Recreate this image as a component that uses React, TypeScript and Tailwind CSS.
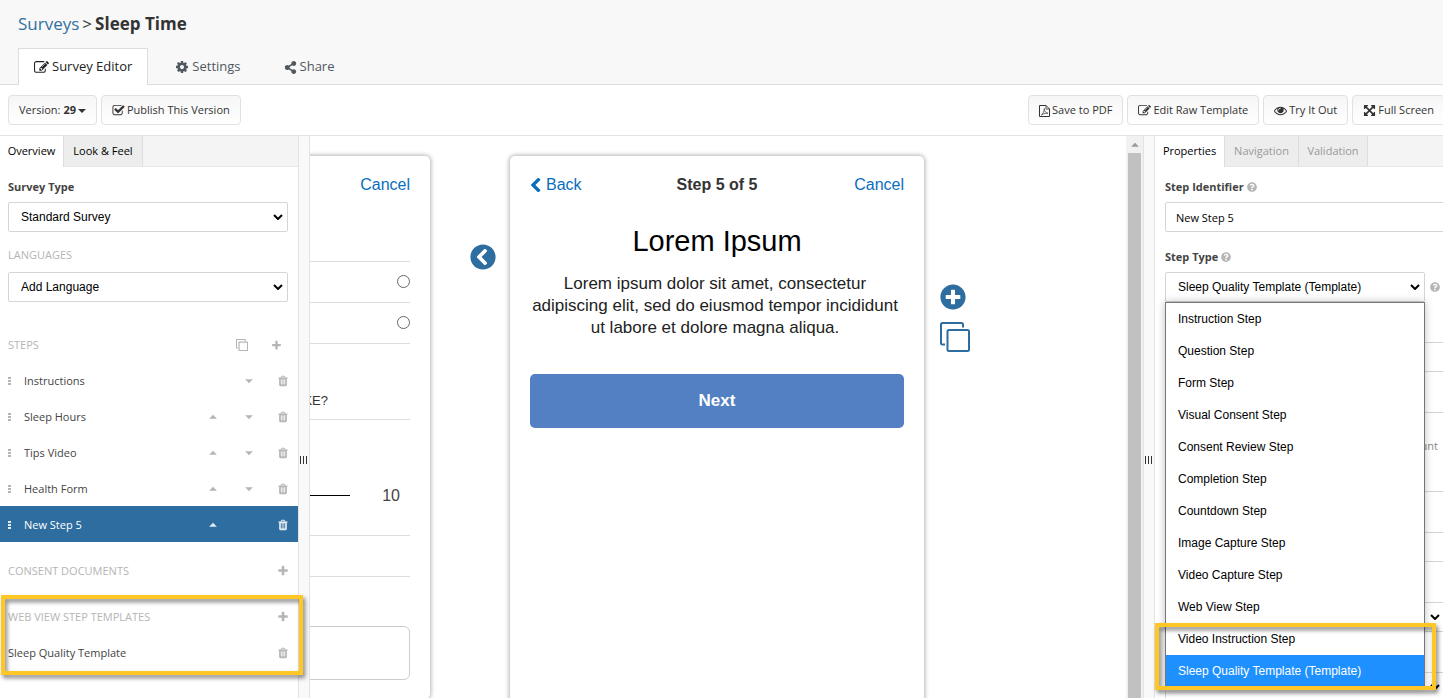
import React from 'react';
import clsx from 'clsx';
import { FaChevronCircleLeft, FaPlusCircle, FaQuestionCircle, FaShareAlt } from 'react-icons/fa';

const ICONS = {
  edit: 'M888 1184l116-116-152-152-116 116v56h96v96h56zm440-720q-16-16-33 1l-350 350q-17 17-1 33t33-1l350-350q17-17 1-33zm80 594v190q0 119-84.5 203.5t-203.5 84.5h-832q-119 0-203.5-84.5t-84.5-203.5v-832q0-119 84.5-203.5t203.5-84.5h832q63 0 117 25 15 7 18 23 3 17-9 29l-49 49q-14 14-32 8-23-6-45-6h-832q-66 0-113 47t-47 113v832q0 66 47 113t113 47h832q66 0 113-47t47-113v-126q0-13 9-22l64-64q15-15 35-7t20 29zm-96-738l288 288-672 672h-288v-288zm444 132l-92 92-288-288 92-92q28-28 68-28t68 28l152 152q28 28 28 68t-28 68z',
  check: 'M1472 930v318q0 119-84.5 203.5t-203.5 84.5h-832q-119 0-203.5-84.5t-84.5-203.5v-832q0-119 84.5-203.5t203.5-84.5h832q63 0 117 25 15 7 18 23 3 17-9 29l-49 49q-10 10-23 10-3 0-9-2-23-6-45-6h-832q-66 0-113 47t-47 113v832q0 66 47 113t113 47h832q66 0 113-47t47-113v-254q0-13 9-22l64-64q10-10 23-10 6 0 12 3 20 8 20 29zm231-489l-814 814q-24 24-57 24t-57-24l-430-430q-24-24-24-57t24-57l110-110q24-24 57-24t57 24l263 263 647-647q24-24 57-24t57 24l110 110q24 24 24 57t-24 57z',
  cog: 'M1152 896q0-106-75-181t-181-75-181 75-75 181 75 181 181 75 181-75 75-181zm512-109v222q0 12-8 23t-20 13l-185 28q-19 54-39 91 35 50 107 138 10 12 10 25t-9 23q-27 37-99 108t-94 71q-12 0-26-9l-138-108q-44 23-91 38-16 136-29 186-7 28-36 28h-222q-14 0-24.5-8.5t-11.5-21.5l-28-184q-49-16-90-37l-141 107q-10 9-25 9-14 0-25-11-126-114-165-168-7-10-7-23 0-12 8-23 15-21 51-66.5t54-70.5q-27-50-41-99l-183-27q-13-2-21-12.5t-8-23.5v-222q0-12 8-23t19-13l186-28q14-46 39-92-40-57-107-138-10-12-10-24 0-10 9-23 26-36 98.5-107.5t94.5-71.5q13 0 26 10l138 107q44-23 91-38 16-136 29-186 7-28 36-28h222q14 0 24.5 8.5t11.5 21.5l28 184q49 16 90 37l142-107q9-9 24-9 13 0 25 10 129 119 165 170 7 8 7 22 0 12-8 23-15 21-51 66.5t-54 70.5q26 50 41 98l183 28q13 2 21 12.5t8 23.5z',
  trash: 'M704 1376v-704q0-14-9-23t-23-9h-64q-14 0-23 9t-9 23v704q0 14 9 23t23 9h64q14 0 23-9t9-23zm256 0v-704q0-14-9-23t-23-9h-64q-14 0-23 9t-9 23v704q0 14 9 23t23 9h64q14 0 23-9t9-23zm256 0v-704q0-14-9-23t-23-9h-64q-14 0-23 9t-9 23v704q0 14 9 23t23 9h64q14 0 23-9t9-23zm-544-992h448l-48-117q-7-9-17-11h-317q-10 2-17 11zm928 32v64q0 14-9 23t-23 9h-96v948q0 83-47 143.5t-113 60.5h-832q-66 0-113-58.5t-47-141.5v-952h-96q-14 0-23-9t-9-23v-64q0-14 9-23t23-9h309l70-167q15-37 54-63t79-26h320q40 0 79 26t54 63l70 167h309q14 0 23 9t9 23z',
  plus: 'M1600 736v192q0 40-28 68t-68 28h-416v416q0 40-28 68t-68 28h-192q-40 0-68-28t-28-68v-416h-416q-40 0-68-28t-28-68v-192q0-40 28-68t68-28h416v-416q0-40 28-68t68-28h192q40 0 68 28t28 68v416h416q40 0 68 28t28 68z',
  eye: 'M1664 960q-152-236-381-353 61 104 61 225 0 185-131.5 316.5t-316.5 131.5-316.5-131.5-131.5-316.5q0-121 61-225-229 117-381 353 133 205 333.5 326.5t434.5 121.5 434.5-121.5 333.5-326.5zm-720-384q0-20-14-34t-34-14q-125 0-214.5 89.5t-89.5 214.5q0 20 14 34t34 14 34-14 14-34q0-86 61-147t147-61q20 0 34-14t14-34zm848 384q0 34-20 69-140 230-376.5 368.5t-499.5 138.5-499.5-139-376.5-368q-20-35-20-69t20-69q140-229 376.5-368t499.5-139 499.5 139 376.5 368q20 35 20 69z',
  arrows: 'M1411 541l-355 355 355 355 144-144q29-31 70-14 39 17 39 59v448q0 26-19 45t-45 19h-448q-42 0-59-40-17-39 14-69l144-144-355-355-355 355 144 144q31 30 14 69-17 40-59 40h-448q-26 0-45-19t-19-45v-448q0-42 40-59 39-17 69 14l144 144 355-355-355-355-144 144q-19 19-45 19-12 0-24-5-40-17-40-59v-448q0-26 19-45t45-19h448q42 0 59 40 17 39-14 69l-144 144 355 355 355-355-144-144q-31-30-14-69 17-40 59-40h448q26 0 45 19t19 45v448q0 42-39 59-13 5-25 5-26 0-45-19z',
  caretDown: 'M320 640h1152l-576 576z',
  caretUp: 'M320 1152h1152l-576-576z',
};

const Icon: React.FC<{ name: keyof typeof ICONS; size?: number; className?: string }> = ({
  name,
  size = 13,
  className,
}) => (
  <svg
    viewBox="0 0 1792 1792"
    width={size}
    height={size}
    fill="currentColor"
    aria-hidden="true"
    className={clsx('shrink-0', className)}
  >
    <path d={ICONS[name]} />
  </svg>
);

const CloneIcon: React.FC<{ size: number; stroke: number }> = ({ size, stroke }) => (
  <svg viewBox="0 0 30 30" width={size} height={size} fill="none" stroke="currentColor" strokeWidth={stroke} aria-hidden="true">
    <rect x="7.5" y="8" width="21.5" height="21" rx="1.5" />
    <path d="M5 22.500H2.500A1.500 1.500 0 0 1 1 21V2.500A1.500 1.500 0 0 1 2.500 1H21.500A1.500 1.500 0 0 1 23 2.500V5.500" />
  </svg>
);

const PdfIcon: React.FC = () => (
  <svg viewBox="0 0 11 12" width="11" height="12" fill="none" stroke="currentColor" aria-hidden="true">
    <path d="M.5.5h6.500l3.500 3.500v7.500H.500z" />
    <path d="M7 .5v3.500h3.500" strokeWidth=".8" />
    <path d="M2.300 10c1.700-1 3-3.800 3-6.500 0 2.700 1.200 4.300 3.700 4.800-2-.3-4 .1-6.700 1.700z" strokeWidth=".7" />
  </svg>
);

const ToolbarButton: React.FC<{ children: React.ReactNode }> = ({ children }) => (
  <button
    type="button"
    className="flex h-[30px] shrink-0 items-center gap-[2px] whitespace-nowrap rounded border border-[#e1e1e1] bg-gradient-to-b from-[#f6f6f6] to-white px-[10px] pt-px text-[#333]"
  >
    {children}
  </button>
);

interface SelectBoxProps {
  id?: string;
  label?: string;
  options: string[];
  value?: string;
  className?: string;
}

const SelectBox: React.FC<SelectBoxProps> = ({ id, label, options, value, className }) => (
  <div className={clsx('relative', className)}>
    <select
      id={id}
      aria-label={label}
      defaultValue={value}
      className="block h-[30px] w-full appearance-none rounded-xs border border-[#d5d5d5] bg-white px-3 font-['Liberation_Sans',Arial,sans-serif] text-[12px] text-black"
    >
      {options.map((option) => (
        <option key={option}>{option}</option>
      ))}
    </select>
    <svg viewBox="0 0 10 6" className="pointer-events-none absolute right-[5px] top-3 h-[6px] w-[10px]" fill="none" stroke="black" strokeWidth="2">
      <path d="M1 1l4 4 4-4" />
    </svg>
  </div>
);

const PanelTab: React.FC<{ label: string; active?: boolean; muted?: boolean }> = ({ label, active, muted }) => (
  <button
    type="button"
    className={clsx(
      'h-[31px] border-r border-[#ddd]',
      active ? 'bg-white' : 'border-b border-b-[#e8e8e8] bg-[#ededed]',
      muted ? 'text-[#999]' : 'text-black',
    )}
  >
    {label}
  </button>
);

const Splitter: React.FC = () => (
  <div className="flex w-3 shrink-0 items-center justify-center gap-[2px] border-x border-[#e3e3e3] bg-[#f9f9f9] pr-[2px] pt-[85px]">
    {[0, 1, 2].map((i) => (
      <span key={i} className="h-2 w-px bg-[#333]" />
    ))}
  </div>
);

const STEPS = ['Instructions', 'Sleep Hours', 'Tips Video', 'Health Form', 'New Step 5'];

const StepRow: React.FC<{ name: string; index: number }> = ({ name, index }) => {
  const selected = index === STEPS.length - 1;
  return (
    <li
      className={clsx(
        'flex h-9 items-center pl-2 pr-[9px] pt-[2px]',
        selected ? 'bg-[#2d6d9f] text-[#e3ebf1]' : 'text-[#b5b5b5]',
      )}
    >
      <span className="flex w-4 flex-col gap-px">
        {[0, 1, 2].map((i) => (
          <span key={i} className="h-[2px] w-[3px] bg-current" />
        ))}
      </span>
      <a href="#step" className={clsx('grow', selected ? 'text-white' : 'text-[#444]')}>
        {name}
      </a>
      <button type="button" aria-label="Move up" className={clsx('w-9', index === 0 && 'invisible')}>
        <Icon name="caretUp" size={12} />
      </button>
      <button type="button" aria-label="Move down" className={clsx('w-[34px]', selected && 'invisible')}>
        <Icon name="caretDown" size={12} />
      </button>
      <button type="button" aria-label="Delete">
        <Icon name="trash" size={12} />
      </button>
    </li>
  );
};

const Overview: React.FC = () => (
  <aside className="z-10 w-[298px] shrink-0 bg-white">
    <div className="flex bg-[#f4f4f4]">
      <div className="grid grid-cols-[64px_79px]">
        <PanelTab label="Overview" active />
        <PanelTab label="Look & Feel" />
      </div>
      <div className="grow border-b border-[#e8e8e8]" />
    </div>
    <div className="pl-2 pr-[10px] pt-[10px]">
      <label htmlFor="survey-type" className="mb-[5px] block font-bold leading-5 text-[#444]">
        Survey Type
      </label>
      <SelectBox id="survey-type" options={['Standard Survey']} />
      <label htmlFor="language" className="mb-[7px] mt-[13px] block leading-5 text-[#b5b5b5]">
        LANGUAGES
      </label>
      <SelectBox id="language" options={['Add Language']} />
    </div>
    <div className="mt-6 flex h-9 items-center px-2 pt-[2px] text-[#b5b5b5]">
      <h2 className="grow">STEPS</h2>
      <button type="button" aria-label="Duplicate step" className="w-[35px]">
        <CloneIcon size={12} stroke={3} />
      </button>
      <button type="button" aria-label="Add step" className="mr-2">
        <Icon name="plus" size={11} />
      </button>
    </div>
    <ul>
      {STEPS.map((name, index) => (
        <StepRow key={name} name={name} index={index} />
      ))}
    </ul>
    <div className="mt-[10px] flex h-9 items-center pl-2 pr-[9px] pt-[2px] text-[#b5b5b5]">
      <h2 className="grow">CONSENT DOCUMENTS</h2>
      <button type="button" aria-label="Add document">
        <Icon name="plus" size={12} />
      </button>
    </div>
    <div className="relative mt-[10px] text-[#b5b5b5]">
      <div className="flex h-9 items-center pl-2 pr-[9px] pt-[2px]">
        <h2 className="grow">WEB VIEW STEP TEMPLATES</h2>
        <button type="button" aria-label="Add template">
          <Icon name="plus" size={12} />
        </button>
      </div>
      <div className="flex h-9 items-center pl-2 pr-[9px] pt-[2px]">
        <a href="#template" className="grow text-[#444]">
          Sleep Quality Template
        </a>
        <button type="button" aria-label="Delete template">
          <Icon name="trash" size={12} />
        </button>
      </div>
      <div className="pointer-events-none absolute -bottom-[5px] -right-[5px] -top-[3px] left-px border-4 border-[#ffc726] drop-shadow-[2px_3px_2px_rgba(0,0,0,0.5)]" />
    </div>
  </aside>
);

const card = 'w-[414px] shrink-0 rounded-[5px] bg-white px-5 shadow-[0_0_4px_1px_rgba(0,0,0,0.3)]';

const Preview: React.FC = () => (
  <main className="flex min-w-0 grow bg-white font-['Liberation_Sans',Arial,sans-serif] text-[16px]">
    <div className="flex min-w-0 grow justify-center overflow-hidden pt-5">
      <section className={clsx(card, 'h-[543px]')}>
        <div className="flex h-14 items-center justify-end pt-[2px]">
          <a href="#cancel" className="text-[#0a6ebd]">Cancel</a>
        </div>
        <div className="mt-[49px]">
          {['first', 'second'].map((choice) => (
            <div key={choice} className="flex h-[41px] items-center justify-end border-t border-[#ddd] pb-[2px]">
              <input
                type="radio"
                name="choice"
                aria-label={choice}
                className="h-[13px] w-[13px] appearance-none rounded-full border border-[#666] bg-white"
              />
            </div>
          ))}
        </div>
        <div className="flex h-[76px] items-end justify-end border-t border-[#ddd] pb-2 pr-[82px] text-[13px] leading-5 text-[#333]">
          WAKE?
        </div>
        <div className="flex h-[116px] items-center justify-end gap-8 border-t border-[#ddd] pr-[10px] pt-9 text-[#444]">
          <input
            type="range"
            aria-label="Rating"
            min={1}
            max={10}
            defaultValue={1}
            className="h-px w-[240px] appearance-none bg-black"
          />
          10
        </div>
        <div className="h-[42px] border-y border-[#ddd]" />
        <input
          type="text"
          aria-label="Answer"
          className="mt-[49px] block h-[54px] w-full rounded-md border border-[#ccc]"
        />
      </section>
      <div className="flex w-20 shrink-0 justify-end pr-[14px] pt-[88px] text-[#2d6d9f]">
        <button type="button" aria-label="Previous step" className="h-[26px]">
          <FaChevronCircleLeft size={26} />
        </button>
      </div>
      <section className={clsx(card, 'h-[600px]')}>
        <div className="grid h-14 grid-cols-3 items-center pt-[2px]">
          <a href="#back" className="flex items-center gap-[5px] text-[#0a6ebd]">
            <svg viewBox="360 60 1100 1540" width="11" height="14" fill="currentColor" aria-hidden="true">
              <path d="M1427 301l-531 531 531 531q19 19 19 45t-19 45l-166 166q-19 19-45 19t-45-19l-742-742q-19-19-19-45t19-45l742-742q19-19 45-19t45 19l166 166q19 19 19 45t-19 45z" />
            </svg>
            Back
          </a>
          <span className="text-center font-bold text-[#333]">Step 5 of 5</span>
          <a href="#cancel" className="text-right text-[#0a6ebd]">Cancel</a>
        </div>
        <h1 className="mt-2 text-center text-[29px] leading-[42px] text-black">Lorem Ipsum</h1>
        <p className="mt-[11px] pr-1 text-center text-[17px] leading-[22px] text-[#222]">
          Lorem ipsum dolor sit amet, consectetur adipiscing elit, sed do eiusmod tempor incididunt ut labore et dolore
          magna aliqua.
        </p>
        <button type="button" className="mt-[35px] h-[54px] w-full rounded-[5px] bg-[#5380c3] text-[17px] font-bold text-white">
          Next
        </button>
      </section>
      <div className="flex w-[82px] shrink-0 flex-col items-start gap-3 pl-4 pt-32 text-[#2d6d9f]">
        <button type="button" aria-label="Add step" className="h-[26px]">
          <FaPlusCircle size={26} />
        </button>
        <button type="button" aria-label="Duplicate step">
          <CloneIcon size={30} stroke={2} />
        </button>
      </div>
      <div className="w-[414px] shrink-0" />
    </div>
    <div className="flex w-[17px] shrink-0 flex-col bg-[#f1f1f1]">
      <div className="flex h-[17px] items-center justify-center text-[#999]">
        <Icon name="caretUp" size={12} />
      </div>
      <div className="mx-[2px] grow bg-[#c1c1c1]" />
    </div>
  </main>
);

const STEP_TYPES = [
  'Instruction Step',
  'Question Step',
  'Form Step',
  'Visual Consent Step',
  'Consent Review Step',
  'Completion Step',
  'Countdown Step',
  'Image Capture Step',
  'Video Capture Step',
  'Web View Step',
  'Video Instruction Step',
  'Sleep Quality Template (Template)',
];

const CURRENT_TYPE = 'Sleep Quality Template (Template)';

const field = 'block h-[30px] w-full rounded-xs border border-[#d5d5d5] bg-white px-[10px] text-black';

const Properties: React.FC = () => (
  <aside className="w-[298px] shrink-0 bg-white">
    <div className="flex bg-[#f4f4f4]">
      <div className="grid grid-cols-[70px_74px_69px]">
        <PanelTab label="Properties" active />
        <PanelTab label="Navigation" muted />
        <PanelTab label="Validation" muted />
      </div>
      <div className="grow border-b border-[#e8e8e8]" />
    </div>
    <div className="pl-[10px] pr-2 pt-[10px]">
      <label htmlFor="identifier" className="mb-[5px] flex items-center gap-[3px] font-bold leading-5 text-[#444]">
        Step Identifier <FaQuestionCircle size={10} className="text-[#b5b5b5]" />
      </label>
      <input id="identifier" type="text" defaultValue="New Step 5" className={field} />
      <label htmlFor="step-type" className="mb-[5px] mt-[15px] flex items-center gap-[3px] font-bold leading-5 text-[#444]">
        Step Type <FaQuestionCircle size={10} className="text-[#b5b5b5]" />
      </label>
      <div className="relative flex items-center gap-[5px]">
        <SelectBox id="step-type" options={STEP_TYPES} value={CURRENT_TYPE} className="w-[260px]" />
        <FaQuestionCircle size={10} className="text-[#b5b5b5]" />
        <ul className="absolute left-0 top-[30px] z-10 w-[260px] border border-[#767676] bg-white font-['Liberation_Sans',Arial,sans-serif] text-[12px] text-black shadow-[0_0_8px_rgba(0,0,0,0.25)]">
          {STEP_TYPES.map((type) => (
            <li
              key={type}
              className={clsx('flex h-8 items-center px-3', type === CURRENT_TYPE && 'bg-[#1e90ff] text-white')}
            >
              {type}
            </li>
          ))}
        </ul>
        <div className="pointer-events-none absolute -left-[10px] top-[351px] z-20 h-[67px] w-[281px] border-4 border-[#ffc726] drop-shadow-[2px_3px_2px_rgba(0,0,0,0.5)]" />
      </div>
      <div className="mt-10 flex flex-col gap-10">
        <input type="text" aria-label="Title" className={field} />
        <textarea
          aria-label="Text"
          defaultValue="amount"
          className="block h-20 w-full resize-none rounded-xs border border-[#d5d5d5] bg-white px-[6px] py-[25px] text-right text-[#888]"
        />
        <input type="text" aria-label="Button text" className={field} />
        <SelectBox label="Alignment" options={['']} />
        <SelectBox label="Visibility" options={['']} />
      </div>
    </div>
  </aside>
);

const App: React.FC = () => (
  <div className="h-screen overflow-hidden bg-white font-['Open_Sans','Noto_Sans',sans-serif] text-[11px] text-[#333]">
    {/* the editor frame runs slightly past the right edge of the window */}
    <div className="flex h-full w-[calc(100%+10px)] flex-col">
      <header className="shrink-0 border-b border-[#ddd] bg-[#f8f8f8] px-[18px]">
        <div className="flex h-12 items-center gap-[3px] text-[17px]">
          <a href="#surveys" className="text-[#31709f]">Surveys</a>
          <span>&gt;</span>
          <h1 className="font-bold">Sleep Time</h1>
        </div>
        <nav className="-mb-px flex gap-[11px] text-[13px] text-[#50575f]">
          <a href="#editor" className="flex h-[37px] items-center gap-[3px] border border-b-0 border-[#ddd] bg-white px-[15px] text-[#222]">
            <Icon name="edit" size={15} />
            Survey Editor
          </a>
          <a href="#settings" className="flex h-[37px] items-center gap-[3px] px-4 pt-px">
            <Icon name="cog" size={14} />
            Settings
          </a>
          <a href="#share" className="flex h-[37px] items-center gap-[3px] px-4 pt-px">
            <FaShareAlt size={13} />
            Share
          </a>
        </nav>
      </header>
      <div className="flex h-[51px] shrink-0 items-center justify-between border-b border-[#e3e3e3] px-2">
        <div className="flex gap-1">
          <ToolbarButton>
            <span>
              Version: <b>29</b>
            </span>
            <svg viewBox="0 0 8 4" className="h-1 w-2" fill="currentColor">
              <path d="M0 0h8L4 4z" />
            </svg>
          </ToolbarButton>
          <ToolbarButton>
            <Icon name="check" />
            Publish This Version
          </ToolbarButton>
        </div>
        <div className="flex gap-1">
          <ToolbarButton>
            <PdfIcon />
            Save to PDF
          </ToolbarButton>
          <ToolbarButton>
            <Icon name="edit" />
            Edit Raw Template
          </ToolbarButton>
          <ToolbarButton>
            <Icon name="eye" />
            Try It Out
          </ToolbarButton>
          <ToolbarButton>
            <Icon name="arrows" />
            Full Screen
          </ToolbarButton>
        </div>
      </div>
      <div className="flex min-h-0 grow">
        <Overview />
        <Splitter />
        <Preview />
        <Splitter />
        <Properties />
      </div>
    </div>
  </div>
);

export default App;
